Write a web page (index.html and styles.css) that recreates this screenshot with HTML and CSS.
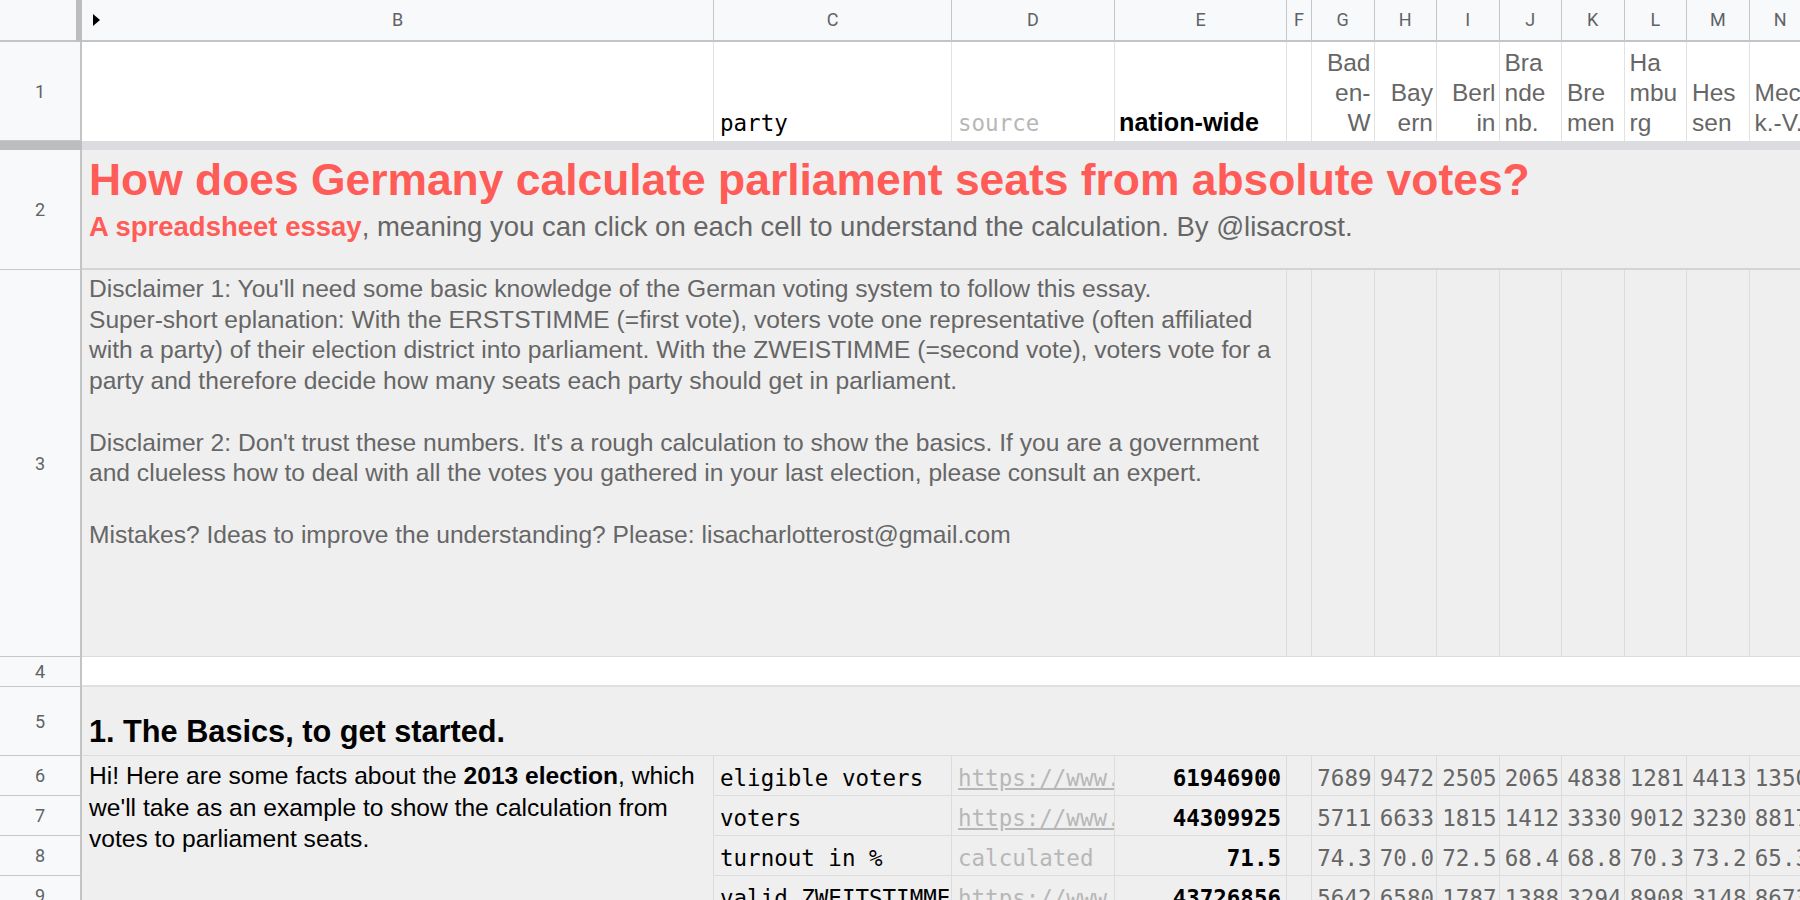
FILE: index.html
```html
<!DOCTYPE html>
<html>
<head>
<meta charset="utf-8">
<link rel="stylesheet" href="styles.css">
</head>
<body>
<div class="sheet">
  <!-- column header row -->
  <div class="ch corner"></div>
  <div class="ch ch-b"><span class="tri"></span>B</div>
  <div class="ch">C</div>
  <div class="ch">D</div>
  <div class="ch">E</div>
  <div class="ch">F</div>
  <div class="ch">G</div>
  <div class="ch">H</div>
  <div class="ch">I</div>
  <div class="ch">J</div>
  <div class="ch">K</div>
  <div class="ch">L</div>
  <div class="ch">M</div>
  <div class="ch">N</div>
  <div class="ch">O</div>

  <!-- row 1 -->
  <div class="rh">1</div>
  <div class="c w1"></div>
  <div class="c w1 mono bot">party</div>
  <div class="c w1 mono bot light">source</div>
  <div class="c w1 bot bold nw">nation-wide</div>
  <div class="c w1"></div>
  <div class="c w1 st right">Bad<br>en-<br>W</div>
  <div class="c w1 st right">Bay<br>ern</div>
  <div class="c w1 st right">Berl<br>in</div>
  <div class="c w1 st">Bra<br>nde<br>nb.</div>
  <div class="c w1 st">Bre<br>men</div>
  <div class="c w1 st">Ha<br>mbu<br>rg</div>
  <div class="c w1 st">Hes<br>sen</div>
  <div class="c w1 st">Mec<br>k.-V.</div>
  <div class="c w1"></div>

  <!-- frozen divider -->
  <div class="fz-rh"></div>
  <div class="fz"></div>

  <!-- row 2 -->
  <div class="rh">2</div>
  <div class="c g wide title-cell">
    <div class="title">How does Germany calculate parliament seats from absolute votes?</div>
    <div class="sub"><span class="red">A spreadsheet essay</span>, meaning you can click on each cell to understand the calculation. By @lisacrost.</div>
  </div>

  <!-- row 3 -->
  <div class="rh">3</div>
  <div class="c g disc">Disclaimer 1: You'll need some basic knowledge of the German voting system to follow this essay.<br>Super-short eplanation: With the ERSTSTIMME (=first vote), voters vote one representative (often affiliated<br>with a party) of their election district into parliament. With the ZWEISTIMME (=second vote), voters vote for a<br>party and therefore decide how many seats each party should get in parliament.<br><br>Disclaimer 2: Don't trust these numbers. It's a rough calculation to show the basics. If you are a government<br>and clueless how to deal with all the votes you gathered in your last election, please consult an expert.<br><br>Mistakes? Ideas to improve the understanding? Please: lisacharlotterost@gmail.com</div>
  <div class="c g"></div>
  <div class="c g"></div>
  <div class="c g"></div>
  <div class="c g"></div>
  <div class="c g"></div>
  <div class="c g"></div>
  <div class="c g"></div>
  <div class="c g"></div>
  <div class="c g"></div>
  <div class="c g"></div>

  <!-- row 4 -->
  <div class="rh">4</div>
  <div class="c wide blank"></div>

  <!-- row 5 -->
  <div class="rh">5</div>
  <div class="c g wide section">1. The Basics, to get started.</div>

  <!-- row 6 -->
  <div class="rh">6</div>
  <div class="c g intro">Hi! Here are some facts about the <b>2013 election</b>, which<br>we'll take as an example to show the calculation from<br>votes to parliament seats.</div>
  <div class="c g mono mid">eligible voters</div>
  <div class="c g mono mid link"><span>https://www.</span></div>
  <div class="c g mono mid num">61946900</div>
  <div class="c g"></div>
  <div class="c g mono mid sv">7689</div>
  <div class="c g mono mid sv">9472</div>
  <div class="c g mono mid sv">2505</div>
  <div class="c g mono mid sv">2065</div>
  <div class="c g mono mid sv">4838</div>
  <div class="c g mono mid sv">1281</div>
  <div class="c g mono mid sv">4413</div>
  <div class="c g mono mid sv">1350</div>
  <div class="c g mono mid sv">1232</div>

  <!-- row 7 -->
  <div class="rh">7</div>
  <div class="c g mono mid">voters</div>
  <div class="c g mono mid link"><span>https://www.</span></div>
  <div class="c g mono mid num">44309925</div>
  <div class="c g"></div>
  <div class="c g mono mid sv">5711</div>
  <div class="c g mono mid sv">6633</div>
  <div class="c g mono mid sv">1815</div>
  <div class="c g mono mid sv">1412</div>
  <div class="c g mono mid sv">3330</div>
  <div class="c g mono mid sv">9012</div>
  <div class="c g mono mid sv">3230</div>
  <div class="c g mono mid sv">8817</div>
  <div class="c g mono mid sv">8972</div>

  <!-- row 8 -->
  <div class="rh">8</div>
  <div class="c g mono mid">turnout in %</div>
  <div class="c g mono mid light">calculated</div>
  <div class="c g mono mid num">71.5</div>
  <div class="c g"></div>
  <div class="c g mono mid sv">74.3</div>
  <div class="c g mono mid sv">70.0</div>
  <div class="c g mono mid sv">72.5</div>
  <div class="c g mono mid sv">68.4</div>
  <div class="c g mono mid sv">68.8</div>
  <div class="c g mono mid sv">70.3</div>
  <div class="c g mono mid sv">73.2</div>
  <div class="c g mono mid sv">65.3</div>
  <div class="c g mono mid sv">72.8</div>

  <!-- row 9 -->
  <div class="rh">9</div>
  <div class="c g mono mid">valid ZWEITSTIMME</div>
  <div class="c g mono mid link"><span>https://www</span></div>
  <div class="c g mono mid num">43726856</div>
  <div class="c g"></div>
  <div class="c g mono mid sv">5642</div>
  <div class="c g mono mid sv">6580</div>
  <div class="c g mono mid sv">1787</div>
  <div class="c g mono mid sv">1388</div>
  <div class="c g mono mid sv">3294</div>
  <div class="c g mono mid sv">8908</div>
  <div class="c g mono mid sv">3148</div>
  <div class="c g mono mid sv">8673</div>
  <div class="c g mono mid sv">8841</div>
</div>
</body>
</html>
```

FILE: styles.css
```css
* { box-sizing: border-box; }
html, body { margin: 0; padding: 0; }
body {
  width: 1800px;
  height: 900px;
  overflow: hidden;
  background: #ffffff;
  font-family: "Liberation Sans", Arial, sans-serif;
  color: #000;
}
.sheet {
  display: grid;
  grid-template-columns: 82px 632px 238px 163px 172px 25px repeat(9, 62.5px);
  grid-template-rows: 42px 99px 9px 120px 387px 30px 69px 40px 40px 40px 40px;
  width: 1875px;
}

/* column headers */
.ch {
  background: #f8f9fa;
  border-right: 1px solid #c4c7c5;
  border-bottom: 2px solid #c4c4c4;
  display: flex;
  align-items: center;
  justify-content: center;
  font-family: Roboto, "Liberation Sans", sans-serif;
  font-size: 18px;
  color: #5f6368;
  padding-bottom: 1px;
}
.corner { border-right: 6px solid #bdbdbd; }
.ch-b { position: relative; }
.tri {
  position: absolute;
  left: 11px;
  top: 14px;
  width: 0;
  height: 0;
  border-top: 6px solid transparent;
  border-bottom: 6px solid transparent;
  border-left: 7px solid #000;
}

/* row headers */
.rh {
  background: #f8f9fa;
  border-right: 2px solid #c4c4c4;
  border-bottom: 1px solid #c8c8c8;
  display: flex;
  align-items: center;
  justify-content: center;
  font-family: Roboto, "Liberation Sans", sans-serif;
  font-size: 18px;
  color: #5f6368;
}

/* frozen divider */
.fz-rh { background: #bdbdbd; }
.fz { grid-column: 2 / -1; background: #dadce0; }

/* cells */
.c {
  border-right: 1px solid #e2e2e2;
  border-bottom: 1px solid #e2e2e2;
  overflow: hidden;
  white-space: nowrap;
  padding: 0 6px;
}
.w1 { background: #fff; border-bottom: none; }
.g { background: #efefef; border-color: #dcdcdc; }
.wide { grid-column: 2 / -1; border-right: none; }

.mono {
  font-family: "DejaVu Sans Mono", "Liberation Mono", monospace;
  font-size: 22.5px;
}
.bot {
  display: flex;
  align-items: flex-end;
  padding-bottom: 5px;
}
.light { color: #b7b7b7; }
.bold { font-weight: bold; }
.nw { font-size: 25.2px; padding-left: 4px; padding-bottom: 4px; }

.st {
  display: flex;
  flex-direction: column;
  justify-content: flex-end;
  align-items: flex-start;
  font-size: 24.5px;
  line-height: 30px;
  color: #666;
  padding: 0 3px 3px 5px;
}
.st.right { align-items: flex-end; text-align: right; }

/* row 2 */
.title-cell { padding: 6px 7px 0; border-bottom: 2px solid #d4d4d4; }
.title {
  font-size: 44.4px;
  font-weight: bold;
  color: #ff5b57;
  line-height: 48px;
}
.sub {
  font-size: 27.5px;
  line-height: 34px;
  color: #666;
  margin-top: 6px;
}
.red { color: #ff5b57; font-weight: bold; }

/* row 3 */
.disc {
  grid-column: span 4;
  font-size: 24.6px;
  line-height: 30.7px;
  color: #666;
  padding: 4px 7px 0;
}

/* row 4 */
.blank { background: #fff; border-bottom: 2px solid #e0e0e0; }

/* row 5 */
.section {
  display: flex;
  align-items: flex-end;
  font-size: 30.7px;
  font-weight: bold;
  padding: 0 7px 5px;
}

/* row 6+ */
.intro {
  grid-row: span 4;
  font-size: 24.6px;
  line-height: 31.6px;
  padding: 4px 7px 0;
}
.mid { display: flex; align-items: center; padding-top: 4px; }
.link { color: #b7b7b7; }
.link span { text-decoration: underline; text-decoration-color: #b7b7b7; }
.num { justify-content: flex-end; font-weight: bold; padding-right: 5px; }
.sv { justify-content: flex-end; color: #666; padding-right: 2px; padding-left: 0; }
```
